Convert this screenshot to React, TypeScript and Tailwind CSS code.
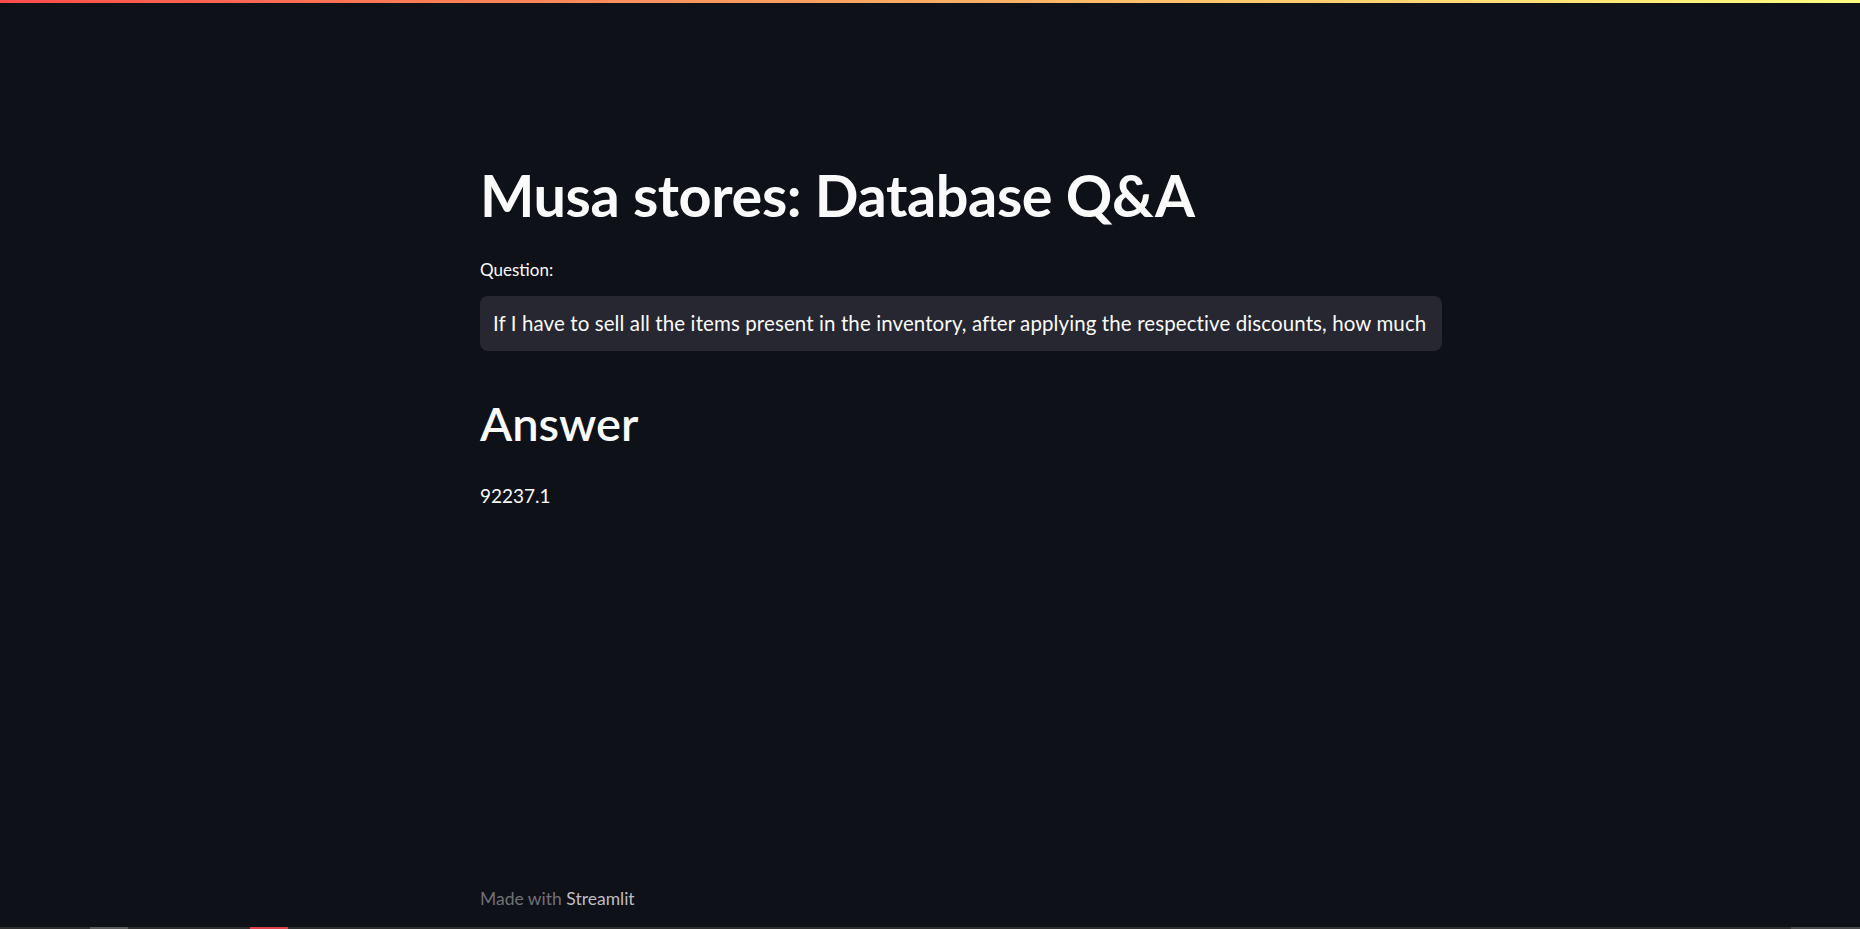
export default function App() {
  return (
    <div className="relative flex h-[929px] w-full flex-col overflow-hidden bg-[#0e1117] text-[#fafafa]" style={{ fontFamily: "Lato, 'Noto Sans', sans-serif" }}>
      {/* top decoration bar */}
      <div className="h-[3px] w-full bg-gradient-to-r from-[#ff4b4b] to-[#fffd80]" />

      <main className="flex flex-1 flex-col pl-[480px]">
        <div className="flex w-[962px] flex-col">
          <h1 className="mt-[163px] text-[57.6px] font-bold leading-none tracking-[-0.4px]">Musa stores: Database Q&amp;A</h1>

          <label className="mt-[37px] text-[17px] leading-none">Question:</label>
          <div className="mt-[18px] flex h-[55px] items-center overflow-hidden rounded-lg bg-[#262730] px-[13px] text-[20.5px]">
            <span className="whitespace-nowrap tracking-[0.1px]">If I have to sell all the items present in the inventory, after applying the respective discounts, how much</span>
          </div>

          <h2 className="mt-[49px] text-[47px] font-semibold leading-none">Answer</h2>
          <p className="mt-[39px] text-[19px] leading-none">92237.1</p>
        </div>

        <footer className="mt-auto mb-[20px] text-[17.5px] leading-none">
          <span className="text-[#707277]">Made with </span>
          <span className="text-[#bdbec2]">Streamlit</span>
        </footer>
      </main>

      {/* taskbar edge peeking at the bottom */}
      <div className="flex h-[2px] w-full bg-[#2e2e2e]">
        <div className="ml-[90px] w-[38px] bg-[#5a5a5a]" />
        <div className="ml-[122px] w-[38px] bg-[#e0404a]" />
        <div className="ml-auto w-[69px] bg-[#4a4a4a]" />
      </div>
    </div>
  );
}
